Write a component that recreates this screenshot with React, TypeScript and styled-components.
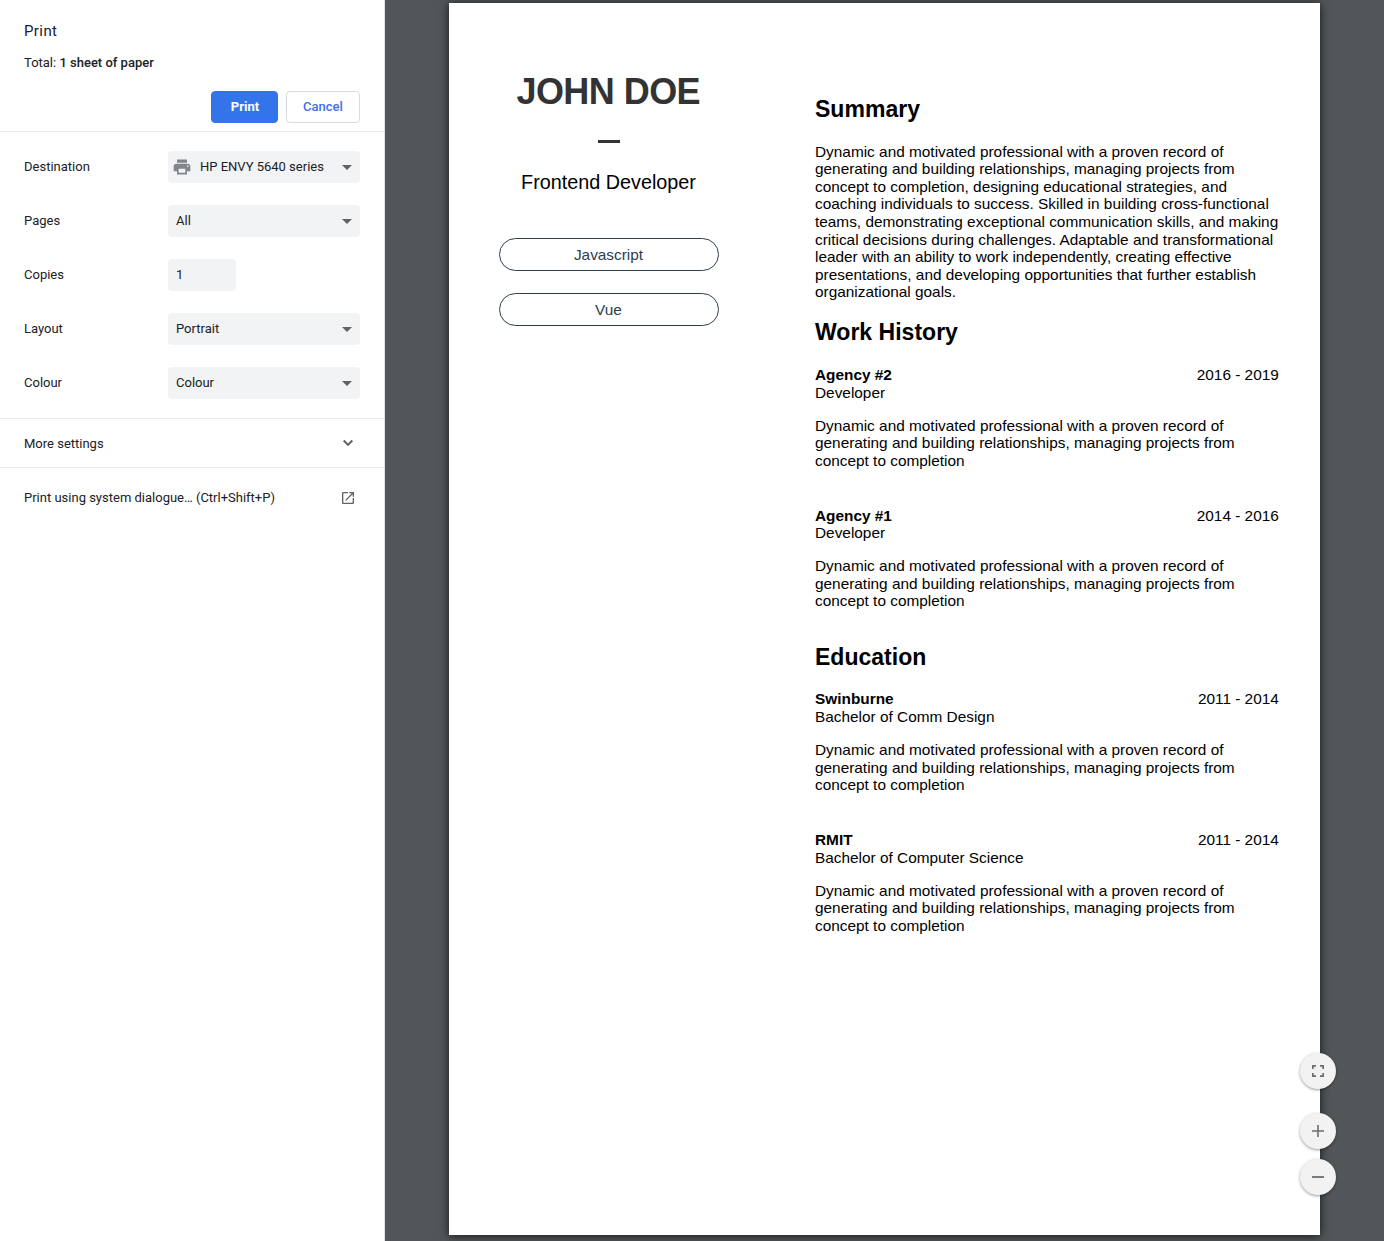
import React from 'react';
import styled, { createGlobalStyle } from 'styled-components';

const GlobalStyle = createGlobalStyle`
  * { box-sizing: border-box; }
  body { margin: 0; background: #525659; overflow: hidden; }
`;

const Shell = styled.div`
  display: flex;
  width: 1384px;
  height: 1241px;
  overflow: hidden;
`;

const Sidebar = styled.aside`
  flex: none;
  width: 385px;
  background: #fff;
  border-right: 1px solid #dfe1e5;
  font-family: Roboto, sans-serif;
  font-size: 13px;
  line-height: 20px;
  color: #202124;
`;

const Header = styled.header`
  height: 132px;
  padding: 21px 24px 0;
  border-bottom: 1px solid #e8eaed;
`;

const Title = styled.h1`
  margin: 0;
  font-size: 15px;
  font-weight: 400;
  line-height: 20px;
  letter-spacing: 0.4px;
`;

const Total = styled.div`
  margin-top: 12px;
  & > b { font-weight: 500; }
`;

const Actions = styled.div`
  display: flex;
  justify-content: flex-end;
  gap: 8px;
  margin-top: 18px;
`;

const Button = styled.button<{ $primary?: boolean }>`
  width: ${(p) => (p.$primary ? 67 : 74)}px;
  height: 32px;
  padding: 0 0 0 ${(p) => (p.$primary ? 1 : 0)}px;
  border: 1px solid ${(p) => (p.$primary ? '#3374eb' : '#dadce0')};
  border-radius: 4px;
  background: ${(p) => (p.$primary ? '#3374eb' : '#fff')};
  color: ${(p) => (p.$primary ? '#fff' : '#3f6fe8')};
  font: ${(p) => (p.$primary ? 700 : 500)} 13px/30px Roboto, sans-serif;
`;

const Settings = styled.section`
  display: flex;
  flex-direction: column;
  gap: 22px;
  height: 287px;
  padding: 19px 24px 0;
  border-bottom: 1px solid #e8eaed;
`;

const Row = styled.div`
  display: flex;
  align-items: center;
  height: 32px;
`;

const Label = styled.label`
  width: 144px;
`;

const Field = styled.div<{ $narrow?: boolean }>`
  display: flex;
  align-items: center;
  width: ${(p) => (p.$narrow ? 68 : 192)}px;
  height: 32px;
  padding: 0 8px;
  border-radius: 4px;
  background: #f1f3f4;
`;

const PrinterIcon = styled.svg`
  width: 20px;
  height: 20px;
  margin: 0 8px 0 -4px;
  fill: #80868b;
`;

const Caret = styled.svg`
  width: 10px;
  height: 5px;
  margin-left: auto;
  fill: #5f6368;
`;

const LinkRow = styled.div<{ $height: number; $divided?: boolean }>`
  display: flex;
  align-items: center;
  justify-content: space-between;
  height: ${(p) => p.$height}px;
  padding: ${(p) => (p.$divided ? '2px 26px 0 24px' : '0 28px 0 24px')};
  border-bottom: ${(p) => (p.$divided ? '1px solid #e8eaed' : 'none')};
`;

const RowIcon = styled.svg<{ $size: number }>`
  width: ${(p) => p.$size}px;
  height: ${(p) => p.$size}px;
  margin-top: ${(p) => (p.$size > 16 ? -2 : 0)}px;
  fill: #5f6368;
`;

const Preview = styled.main`
  position: relative;
  flex: 1;
  padding: 3px 64px 0;
  background: #525659;
`;

const Page = styled.article`
  display: flex;
  width: 871px;
  height: 1232px;
  background: #fff;
  box-shadow: 0 1px 9px rgba(0, 0, 0, 0.75);
  font-family: 'Liberation Sans', Arial, sans-serif;
  font-size: 15.38px;
  line-height: 17.55px;
  color: #000;
`;

const Profile = styled.div`
  display: flex;
  flex-direction: column;
  align-items: center;
  width: 320px;
  padding-top: 69px;
`;

const Name = styled.h1`
  margin: 0 1.5px 0 0;
  font-size: 36px;
  line-height: 40px;
  letter-spacing: -0.55px;
  color: #333;
`;

const Dash = styled.div`
  width: 22px;
  height: 3px;
  margin-top: 28px;
  background: #333;
`;

const Role = styled.div`
  margin: 28px 1px 0 0;
  font-size: 19.8px;
  line-height: 23px;
`;

const Skills = styled.div`
  display: flex;
  flex-direction: column;
  gap: 22px;
  margin-top: 44px;
`;

const Skill = styled.div`
  width: 220px;
  height: 33px;
  padding-right: 1px;
  border: 1px solid #2c3e50;
  border-radius: 16.5px;
  line-height: 31px;
  text-align: center;
  color: #2c3e50;
`;

const Resume = styled.div`
  width: 465px;
  margin-left: 46px;
  padding-top: 93px;
`;

const Heading = styled.h2<{ $gap: number }>`
  margin: 0 0 ${(p) => p.$gap}px;
  font-size: 23.04px;
  line-height: 26.33px;
`;

const Paragraph = styled.p`
  margin: 0;
`;

const Part = styled.section<{ $after: number }>`
  margin-bottom: ${(p) => p.$after}px;
`;

const Entry = styled.div`
  & + & { margin-top: 37.27px; }
`;

const EntryHead = styled.div`
  display: flex;
  justify-content: space-between;
  height: 17.75px;
  padding-right: 1.2px;
`;

const Position = styled.div`
  margin-bottom: 15.36px;
`;

const RoundButton = styled.button`
  display: flex;
  align-items: center;
  justify-content: center;
  width: 36px;
  height: 36px;
  padding: 0;
  border: 0;
  border-radius: 50%;
  background: #f2f2f2;
  box-shadow: 0 1px 3px rgba(0, 0, 0, 0.4);
  & + & { margin-top: 10px; }
  &:first-child { margin-bottom: 24px; }
  svg { width: 24px; height: 24px; fill: #6e6e6e; }
`;

const ZoomControls = styled.div`
  position: absolute;
  right: 48px;
  top: 1053px;
`;

const CaretDown = () => (
  <Caret viewBox="0 0 10 5"><path d="M0 0h10L5 5z" /></Caret>
);

const blurb =
  'Dynamic and motivated professional with a proven record of generating and building relationships, managing projects from concept to completion';

const summary =
  blurb +
  ', designing educational strategies, and coaching individuals to success. Skilled in building cross-functional teams, demonstrating exceptional communication skills, and making critical decisions during challenges. Adaptable and transformational leader with an ability to work independently, creating effective presentations, and developing opportunities that further establish organizational goals.';

interface Item { place: string; years: string; position: string }

const work: Item[] = [
  { place: 'Agency #2', years: '2016 - 2019', position: 'Developer' },
  { place: 'Agency #1', years: '2014 - 2016', position: 'Developer' },
];

const education: Item[] = [
  { place: 'Swinburne', years: '2011 - 2014', position: 'Bachelor of Comm Design' },
  { place: 'RMIT', years: '2011 - 2014', position: 'Bachelor of Computer Science' },
];

const Entries = ({ items }: { items: Item[] }) => (
  <>
    {items.map((item) => (
      <Entry key={item.place}>
        <EntryHead><b>{item.place}</b><span>{item.years}</span></EntryHead>
        <Position>{item.position}</Position>
        <Paragraph>{blurb}</Paragraph>
      </Entry>
    ))}
  </>
);

export default function App() {
  return (
    <Shell>
      <GlobalStyle />
      <Sidebar>
        <Header>
          <Title>Print</Title>
          <Total>Total: <b>1 sheet of paper</b></Total>
          <Actions>
            <Button $primary>Print</Button>
            <Button>Cancel</Button>
          </Actions>
        </Header>
        <Settings>
          <Row>
            <Label>Destination</Label>
            <Field>
              <PrinterIcon viewBox="0 0 24 24">
                <path d="M19 8H5c-1.66 0-3 1.34-3 3v6h4v4h12v-4h4v-6c0-1.66-1.34-3-3-3zm-3 11H8v-5h8v5zm3-7c-.55 0-1-.45-1-1s.45-1 1-1 1 .45 1 1-.45 1-1 1zm-1-9H6v4h12V3z" />
              </PrinterIcon>
              HP ENVY 5640 series
              <CaretDown />
            </Field>
          </Row>
          <Row><Label>Pages</Label><Field>All<CaretDown /></Field></Row>
          <Row><Label>Copies</Label><Field $narrow>1</Field></Row>
          <Row><Label>Layout</Label><Field>Portrait<CaretDown /></Field></Row>
          <Row><Label>Colour</Label><Field>Colour<CaretDown /></Field></Row>
        </Settings>
        <LinkRow $height={49} $divided>
          More settings
          <RowIcon $size={20} viewBox="0 0 24 24"><path d="M16.3 8.2L12 12.5 7.7 8.2 6 9.9l6 6 6-6z" /></RowIcon>
        </LinkRow>
        <LinkRow $height={60}>
          Print using system dialogue… (Ctrl+Shift+P)
          <RowIcon $size={16} viewBox="0 0 24 24">
            <path d="M19 19H5V5h7V3H5c-1.11 0-2 .9-2 2v14c0 1.1.89 2 2 2h14c1.1 0 2-.9 2-2v-7h-2v7zM14 3v2h3.59l-9.83 9.83 1.41 1.41L19 6.41V10h2V3h-7z" />
          </RowIcon>
        </LinkRow>
      </Sidebar>
      <Preview>
        <Page>
          <Profile>
            <Name>JOHN DOE</Name>
            <Dash />
            <Role>Frontend Developer</Role>
            <Skills>
              <Skill>Javascript</Skill>
              <Skill>Vue</Skill>
            </Skills>
          </Profile>
          <Resume>
            <Part $after={18.15}>
              <Heading $gap={20.45}>Summary</Heading>
              <Paragraph>{summary}</Paragraph>
            </Part>
            <Part $after={34.13}>
              <Heading $gap={20.8}>Work History</Heading>
              <Entries items={work} />
            </Part>
            <Part $after={0}>
              <Heading $gap={20.1}>Education</Heading>
              <Entries items={education} />
            </Part>
          </Resume>
        </Page>
        <ZoomControls>
          <RoundButton aria-label="Fit to page">
            <svg viewBox="0 0 24 24"><path d="M6 6h4v1.7H7.7V10H6zM14 6h4v4h-1.7V7.7H14zM6 14h1.7v2.3H10V18H6zM16.3 14H18v4h-4v-1.7h2.3z" /></svg>
          </RoundButton>
          <RoundButton aria-label="Zoom in">
            <svg viewBox="0 0 24 24"><path d="M11.2 6h1.6v5.2H18v1.6h-5.2V18h-1.6v-5.2H6v-1.6h5.2z" /></svg>
          </RoundButton>
          <RoundButton aria-label="Zoom out">
            <svg viewBox="0 0 24 24"><path d="M6 11.1h12v1.8H6z" /></svg>
          </RoundButton>
        </ZoomControls>
      </Preview>
    </Shell>
  );
}
